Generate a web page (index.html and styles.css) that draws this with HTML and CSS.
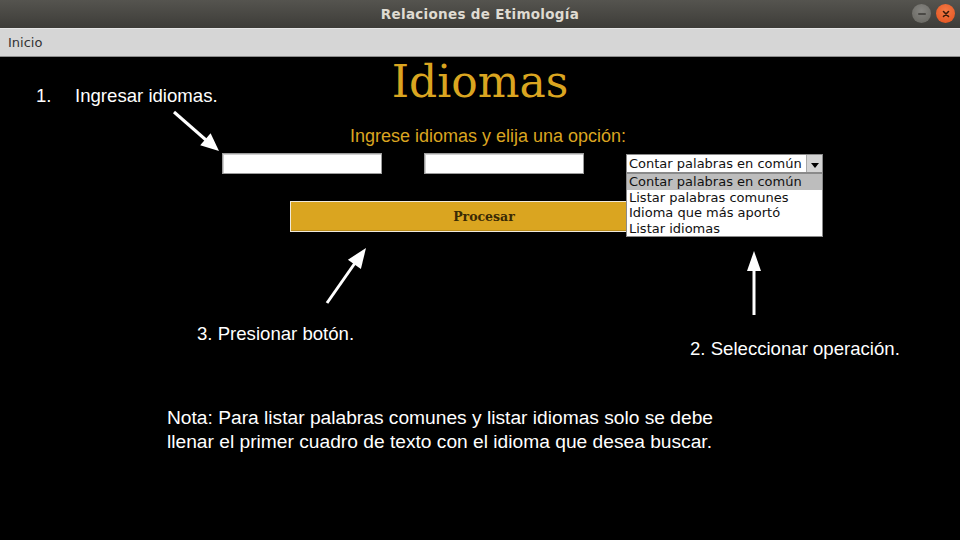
FILE: index.html
```html
<!DOCTYPE html>
<html lang="es">
<head>
<meta charset="utf-8">
<title>Relaciones de Etimología</title>
<link rel="stylesheet" href="styles.css">
</head>
<body>
<div class="window">
  <header class="titlebar">
    <span class="title">Relaciones de Etimología</span>
    <div class="controls">
      <span class="btn-min"><span class="dash"></span></span>
      <span class="btn-close">
        <svg width="10" height="10" viewBox="0 0 10 10"><path d="M2.5 2.5 L7.5 7.5 M7.5 2.5 L2.5 7.5" stroke="#3a1a0a" stroke-width="1.6" stroke-linecap="round"/></svg>
      </span>
    </div>
  </header>
  <nav class="menubar"><span class="menu-item">Inicio</span></nav>
  <main class="canvas">
    <h1 class="heading">Idiomas</h1>
    <p class="subtitle">Ingrese idiomas y elija una opción:</p>
    <div class="form-row">
      <input class="field" type="text">
      <input class="field" type="text">
      <div class="combo">
        <span class="combo-value">Contar palabras en común</span>
        <span class="combo-arrow">
          <svg width="8" height="5" viewBox="0 0 8 5"><path d="M0 0 H8 L4 5 Z" fill="#000"/></svg>
        </span>
        <ul class="combo-list">
          <li class="selected">Contar palabras en común</li>
          <li>Listar palabras comunes</li>
          <li>Idioma que más aportó</li>
          <li>Listar idiomas</li>
        </ul>
      </div>
    </div>
    <button class="process" type="button">Procesar</button>
  </main>
  <div class="annotations">
    <span class="note n1"><span class="num">1.</span>Ingresar idiomas.</span>
    <span class="note n3">3. Presionar botón.</span>
    <span class="note n2">2. Seleccionar operación.</span>
    <p class="note nota">Nota: Para listar palabras comunes y listar idiomas solo se debe<br>llenar el primer cuadro de texto con el idioma que desea buscar.</p>
    <svg class="arrows" width="960" height="540" viewBox="0 0 960 540">
      <g fill="#fff" stroke="#fff">
        <line x1="174" y1="112" x2="206" y2="140" stroke-width="3"/>
        <polygon points="219,151 200.2,145.2 210.6,133.2" stroke="none"/>
        <line x1="327" y1="303" x2="355" y2="263" stroke-width="3"/>
        <polygon points="366,248 360.9,268.9 347.9,259.7" stroke="none"/>
        <line x1="754" y1="315" x2="754" y2="270" stroke-width="3"/>
        <polygon points="754,251 747,271 761,271" stroke="none"/>
      </g>
    </svg>
  </div>
</div>
</body>
</html>
```
FILE: styles.css
```css
* { box-sizing: border-box; }
html, body { margin: 0; padding: 0; background: #000; }
.window {
  position: relative;
  width: 960px;
  height: 540px;
  display: flex;
  flex-direction: column;
  background: #000;
  overflow: hidden;
}
.titlebar {
  height: 28px;
  flex: none;
  position: relative;
  display: flex;
  align-items: center;
  justify-content: center;
  background: linear-gradient(#55544f, #3d3c38);
}
.title {
  font-family: "DejaVu Sans", sans-serif;
  font-weight: bold;
  font-size: 13.5px;
  color: #dfdbd2;
  letter-spacing: 0.3px;
}
.controls {
  position: absolute;
  right: 5px;
  top: 4px;
  display: flex;
  gap: 5px;
}
.btn-min, .btn-close {
  width: 19px;
  height: 19px;
  border-radius: 50%;
  display: flex;
  align-items: center;
  justify-content: center;
}
.btn-min { background: radial-gradient(circle at 50% 35%, #858480, #66655f); }
.dash { width: 8px; height: 2px; background: #4a4945; border-radius: 1px; }
.btn-close { background: radial-gradient(circle at 50% 35%, #f47a45, #e2501d); }
.menubar {
  height: 29px;
  flex: none;
  background: #d6d6d6;
  border-top: 1px solid #e6e6e6;
  border-bottom: 1px solid #8e8e8e;
  display: flex;
  align-items: center;
  padding-left: 8px;
}
.menu-item {
  font-family: "DejaVu Sans", sans-serif;
  font-size: 13px;
  color: #333;
}
.canvas {
  flex: 1;
  display: flex;
  flex-direction: column;
  align-items: flex-start;
}
.heading {
  margin: 3px 0 0 0;
  align-self: center;
  font-family: "DejaVu Serif", serif;
  font-weight: normal;
  font-size: 44px;
  line-height: 44px;
  color: #daa520;
}
.subtitle {
  margin: 22px 0 0 0;
  align-self: center;
  font-family: "Liberation Sans", Arial, sans-serif;
  font-size: 18px;
  line-height: 20px;
  color: #daa520;
  padding-left: 16px;
}
.form-row {
  margin-top: 7px;
  padding-left: 222px;
  display: flex;
  align-items: flex-start;
}
.field {
  width: 160px;
  height: 21px;
  margin: 0 42px 0 0;
  padding: 0;
  background: #fff;
  border: 1px solid #9c9c9c;
  box-shadow: inset 1px 1px 0 #cfcfcf;
}
.combo {
  position: relative;
  width: 197px;
  height: 19px;
  margin-top: 1px;
  background: #fff;
  border: 1px solid #8a8a8a;
  display: flex;
  align-items: center;
}
.combo-value {
  flex: 1;
  padding-left: 2px;
  font-family: "DejaVu Sans", sans-serif;
  font-size: 13px;
  color: #111;
  white-space: nowrap;
  overflow: hidden;
}
.combo-arrow {
  width: 16px;
  height: 17px;
  background: #d4d4d4;
  border-left: 1px solid #a8a8a8;
  display: flex;
  align-items: center;
  justify-content: center;
  padding-top: 3px;
}
.combo-list {
  position: absolute;
  left: -1px;
  top: 18px;
  width: 197px;
  margin: 0;
  padding: 0;
  list-style: none;
  background: #fff;
  border: 1px solid #8a8a8a;
  z-index: 2;
}
.combo-list li {
  height: 15.5px;
  line-height: 15.5px;
  padding-left: 2px;
  font-family: "DejaVu Sans", sans-serif;
  font-size: 13px;
  color: #111;
  white-space: nowrap;
}
.combo-list li.selected { background: #bdbdbd; }
.process {
  margin: 27px 0 0 290px;
  width: 388px;
  height: 31px;
  padding: 0;
  background: #daa520;
  border: 1px solid #efe9dc;
  box-shadow: inset -1px -1px 0 #b88a18;
  font-family: "DejaVu Serif", serif;
  font-weight: bold;
  font-size: 12.5px;
  color: #3a2a05;
}
.annotations {
  position: absolute;
  inset: 0;
  pointer-events: none;
}
.note {
  position: absolute;
  margin: 0;
  font-family: "Liberation Sans", Arial, sans-serif;
  font-size: 18.6px;
  line-height: 20px;
  color: #fff;
  white-space: nowrap;
}
.num { display: inline-block; width: 39px; }
.n1 { left: 36px; top: 86px; }
.n3 { left: 197px; top: 324px; }
.n2 { left: 690px; top: 339px; }
.nota { left: 167px; top: 406px; font-size: 19.2px; line-height: 24px; }
.arrows { position: absolute; left: 0; top: 0; }
```
